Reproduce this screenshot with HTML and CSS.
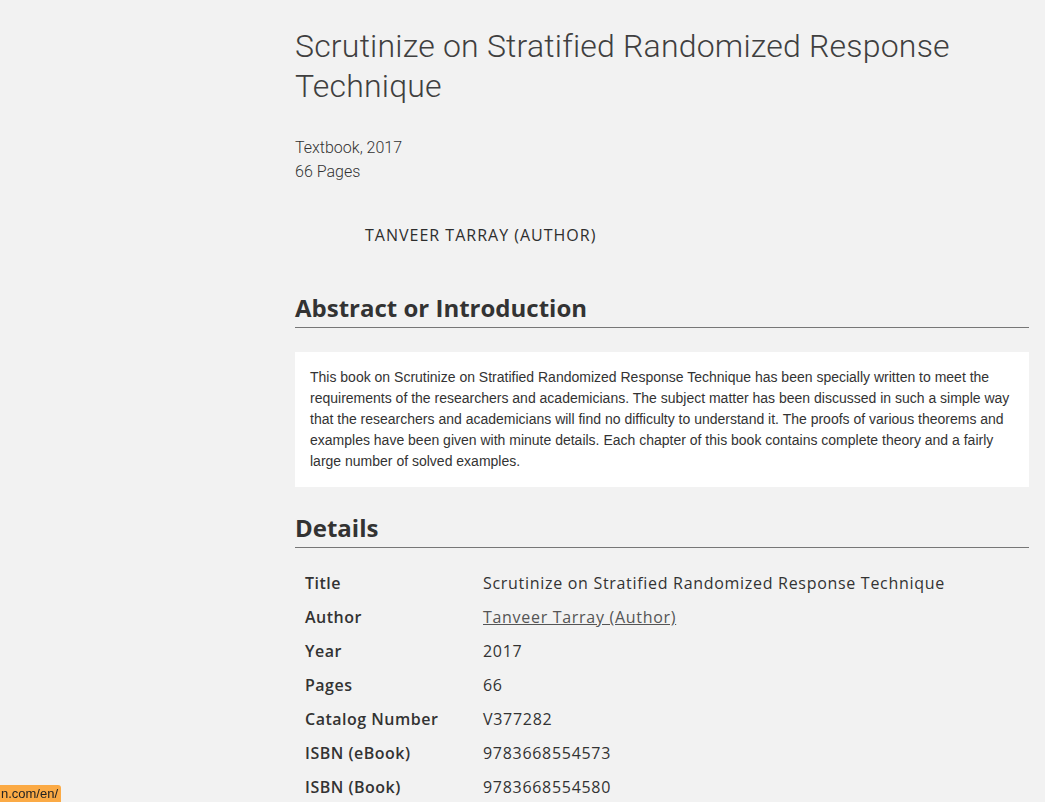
FILE: index.html
```html
<!DOCTYPE html>
<html lang="en">
<head>
  <meta charset="UTF-8">
  <meta name="viewport" content="width=device-width, initial-scale=1.0">
  <title>Scrutinize on Stratified Randomized Response Technique</title>
  <link rel="stylesheet" href="styles.css">
</head>
<body>
  <div class="page">
    <aside class="sidebar"></aside>
    <main class="document">
      <h1 class="doc-title">Scrutinize on Stratified Randomized Response Technique</h1>
      <div class="doc-meta">
        <p>Textbook, 2017</p>
        <p>66 Pages</p>
      </div>
      <div class="authors">
        <span class="author-name">Tanveer Tarray (Author)</span>
      </div>

      <h2 class="section-head">Abstract or Introduction</h2>
      <div class="abstract">
        This book on Scrutinize on Stratified Randomized Response Technique has been specially written to meet the requirements of the researchers and academicians. The subject matter has been discussed in such a simple way that the researchers and academicians will find no difficulty to understand it. The proofs of various theorems and examples have been given with minute details. Each chapter of this book contains complete theory and a fairly large number of solved examples.
      </div>

      <h2 class="section-head">Details</h2>
      <table class="details">
        <tr><th>Title</th><td>Scrutinize on Stratified Randomized Response Technique</td></tr>
        <tr><th>Author</th><td><a href="#">Tanveer Tarray (Author)</a></td></tr>
        <tr><th>Year</th><td>2017</td></tr>
        <tr><th>Pages</th><td>66</td></tr>
        <tr><th>Catalog Number</th><td>V377282</td></tr>
        <tr><th>ISBN (eBook)</th><td>9783668554573</td></tr>
        <tr><th>ISBN (Book)</th><td>9783668554580</td></tr>
      </table>
    </main>
  </div>
  <div class="status-url"><span>n.com/en/</span></div>
</body>
</html>
```

FILE: styles.css
```css
body { margin: 0; background: #f2f2f2; color: #3c3c3c; font-family: "Open Sans", Arial, sans-serif; }
.page { display: flex; }
.sidebar { width: 295px; flex-shrink: 0; }
.document { width: 734px; padding-top: 26px; }

.doc-title { font-family: Roboto, "Liberation Sans", sans-serif; font-weight: 300; font-size: 32px; line-height: 40px; letter-spacing: 0.2px; color: #3f3f3f; margin: 0 0 30px; }
.doc-meta p { margin: 0; font-family: Roboto, sans-serif; font-weight: 300; font-size: 16px; line-height: 24px; color: #333; }
.authors { padding: 40px 0 0 70px; height: 48px; }
.author-name { text-transform: uppercase; font-size: 16px; font-weight: 500; color: #2e2e2e; letter-spacing: 1px; }

.section-head { font-size: 24px; font-weight: 700; color: #333; margin: 20px 0 0; padding-bottom: 3px; line-height: 32px; border-bottom: 1px solid #777; letter-spacing: 0; }
.abstract { background: #fff; margin: 24px 0 25px; padding: 15px; font-family: "Liberation Sans", Arial, sans-serif; font-size: 14px; line-height: 21px; color: #333; }

.details { border-collapse: collapse; margin-top: 18px; font-size: 16px; line-height: 20px; letter-spacing: 0.7px; }
.details th { text-align: left; font-weight: 600; width: 158px; padding: 7px 10px; color: #333; letter-spacing: 0.5px; }
.details td { padding: 7px 10px; color: #333; font-weight: 500; }
.details a { color: #555; }

.status-url { position: fixed; left: 0; bottom: 0; display: flex; justify-content: flex-end; background: #fbaa45; color: #222; font-family: "Liberation Sans", Arial, sans-serif; font-size: 13px; line-height: 17px; padding-right: 3px; border-top-right-radius: 3px; width: 58px; white-space: nowrap; overflow: hidden; }
.status-url span { flex-shrink: 0; }
```
